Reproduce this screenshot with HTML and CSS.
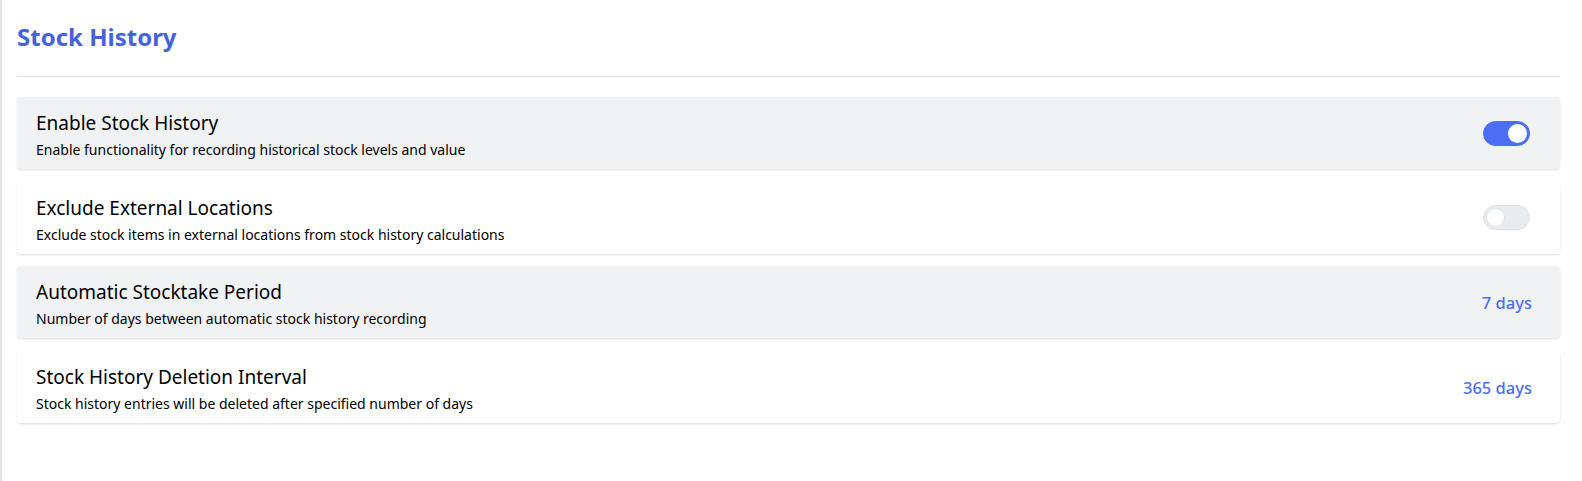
FILE: index.html
```html
<!DOCTYPE html>
<html lang="en">
<head>
    <meta charset="UTF-8">
    <meta name="viewport" content="width=device-width, initial-scale=1.0">
    <title>Stock History</title>
    <link rel="stylesheet" href="styles.css">
</head>
<body>
    <div class="page">
        <h2 class="page-title">Stock History</h2>
        <hr class="divider">

        <div class="settings">
            <div class="setting shaded">
                <div class="setting-text">
                    <div class="setting-name">Enable Stock History</div>
                    <div class="setting-desc">Enable functionality for recording historical stock levels and value</div>
                </div>
                <span class="switch on"><span class="knob"></span></span>
            </div>

            <div class="setting">
                <div class="setting-text">
                    <div class="setting-name">Exclude External Locations</div>
                    <div class="setting-desc">Exclude stock items in external locations from stock history calculations</div>
                </div>
                <span class="switch"><span class="knob"></span></span>
            </div>

            <div class="setting shaded">
                <div class="setting-text">
                    <div class="setting-name">Automatic Stocktake Period</div>
                    <div class="setting-desc">Number of days between automatic stock history recording</div>
                </div>
                <span class="setting-value">7 days</span>
            </div>

            <div class="setting">
                <div class="setting-text">
                    <div class="setting-name">Stock History Deletion Interval</div>
                    <div class="setting-desc">Stock history entries will be deleted after specified number of days</div>
                </div>
                <span class="setting-value">365 days</span>
            </div>
        </div>
    </div>
</body>
</html>
```

FILE: styles.css
```css
html, body {
    margin: 0;
    padding: 0;
    height: 100%;
}

body {
    font-family: "Noto Sans", "Open Sans", sans-serif;
    background-color: #ffffff;
    color: #000000;
    border-left: 2px solid #e2e4e8;
    box-sizing: border-box;
}

.page {
    padding: 20px 22px 0 15px;
}

.page-title {
    margin: 0;
    font-size: 24px;
    line-height: 34px;
    font-weight: 700;
    color: #4463d9;
}

.divider {
    border: none;
    border-top: 1px solid #e2e4e8;
    margin: 22px 0 20px 0;
}

/* Settings list */
.settings {
    display: flex;
    flex-direction: column;
    gap: 12.7px;
}

.setting {
    height: 72px;
    box-sizing: border-box;
    display: flex;
    align-items: center;
    justify-content: space-between;
    padding: 0 28px 0 19px;
    background-color: #ffffff;
    border-radius: 4px;
    box-shadow: 0 1px 3px rgba(0, 0, 0, 0.08), 0 1px 2px rgba(0, 0, 0, 0.06);
}

.setting.shaded {
    background-color: #f1f2f4;
}

.setting-text {
    padding-top: 4px;
}

.setting-name {
    font-size: 19px;
    line-height: 26px;
}

.setting-desc {
    font-size: 14px;
    line-height: 20px;
    margin-top: 4px;
}

.setting-value {
    font-size: 16.5px;
    font-weight: 500;
    color: #4c6ef5;
}

/* Toggle switch */
.switch {
    position: relative;
    display: block;
    width: 47px;
    height: 25px;
    margin-right: 2px;
    border-radius: 9999px;
    background-color: #e9ecef;
    border: 1px solid #dee2e6;
    box-sizing: border-box;
}

.switch .knob {
    position: absolute;
    top: 2px;
    left: 2px;
    width: 19px;
    height: 19px;
    border-radius: 50%;
    background-color: #ffffff;
    border: 1px solid #dee2e6;
    box-sizing: border-box;
}

.switch.on {
    background-color: #4c6ef5;
    border-color: #4c6ef5;
}

.switch.on .knob {
    left: auto;
    right: 2px;
    border: none;
}
```
